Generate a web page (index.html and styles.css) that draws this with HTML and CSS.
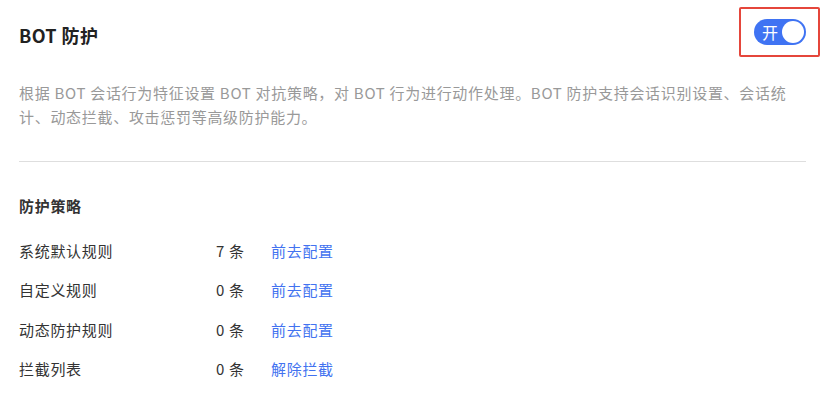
FILE: index.html
```html
<!DOCTYPE html>
<html lang="zh-CN">
<head>
  <meta charset="UTF-8">
  <title>BOT 防护</title>
  <link rel="stylesheet" href="styles.css">
</head>
<body>

<div class="panel">
  <div class="head">
    <h1 class="title">BOT 防护</h1>
    <div class="mark">
      <span class="switch"><span class="switch-text">开</span><span class="knob"></span></span>
    </div>
  </div>

  <p class="desc">根据 BOT 会话行为特征设置 BOT 对抗策略，对 BOT 行为进行动作处理。BOT 防护支持会话识别设置、会话统计、动态拦截、攻击惩罚等高级防护能力。</p>

  <div class="divider"></div>

  <h2 class="sub">防护策略</h2>

  <ul class="rules">
    <li><span class="name">系统默认规则</span><span class="count">7 条</span><a class="link" href="#">前去配置</a></li>
    <li><span class="name">自定义规则</span><span class="count">0 条</span><a class="link" href="#">前去配置</a></li>
    <li><span class="name">动态防护规则</span><span class="count">0 条</span><a class="link" href="#">前去配置</a></li>
    <li><span class="name">拦截列表</span><span class="count">0 条</span><a class="link" href="#">解除拦截</a></li>
  </ul>
</div>

</body>
</html>
```

FILE: styles.css
```css
body {
  margin: 0;
  padding: 0;
  background: #fff;
  font-family: "Noto Sans CJK SC", "Noto Sans", sans-serif;
  color: #333;
}

.panel {
  width: 787px;
  padding: 7px 0 0 19px;
}

.head {
  display: flex;
  align-items: center;
  justify-content: space-between;
  height: 50px;
  width: 801px;
}

.title {
  margin: 6px 0 0;
  font-size: 18px;
  line-height: 24px;
  font-weight: bold;
  letter-spacing: 0.4px;
  color: #222;
}

.mark {
  box-sizing: border-box;
  width: 81px;
  height: 50px;
  border: 2px solid #e5463b;
  border-radius: 2px;
  display: flex;
  align-items: center;
  padding-left: 13px;
}

.switch {
  display: flex;
  align-items: center;
  justify-content: space-between;
  width: 52px;
  height: 26px;
  border-radius: 13px;
  background: #3f73f3;
  padding: 0 2px 0 8px;
  box-sizing: border-box;
}

.switch-text {
  color: #fff;
  font-size: 16px;
  line-height: 1;
}

.knob {
  width: 22px;
  height: 22px;
  border-radius: 50%;
  background: #fff;
}

.desc {
  margin: 24px 0 0;
  font-size: 15px;
  line-height: 24px;
  letter-spacing: 0.7px;
  color: #999;
}

.divider {
  height: 1px;
  background: #dedede;
  margin-top: 32px;
}

.sub {
  margin: 32px 0 0;
  font-size: 15px;
  line-height: 24px;
  letter-spacing: 0.7px;
  font-weight: bold;
  color: #333;
}

.rules {
  list-style: none;
  margin: 13px 0 0;
  padding: 0;
}

.rules li {
  display: flex;
  height: 39.3px;
  align-items: center;
  font-size: 15px;
  letter-spacing: 0.7px;
}

.name {
  width: 197px;
}

.count {
  width: 55px;
}

.link {
  color: #4272f0;
  text-decoration: none;
}
```
